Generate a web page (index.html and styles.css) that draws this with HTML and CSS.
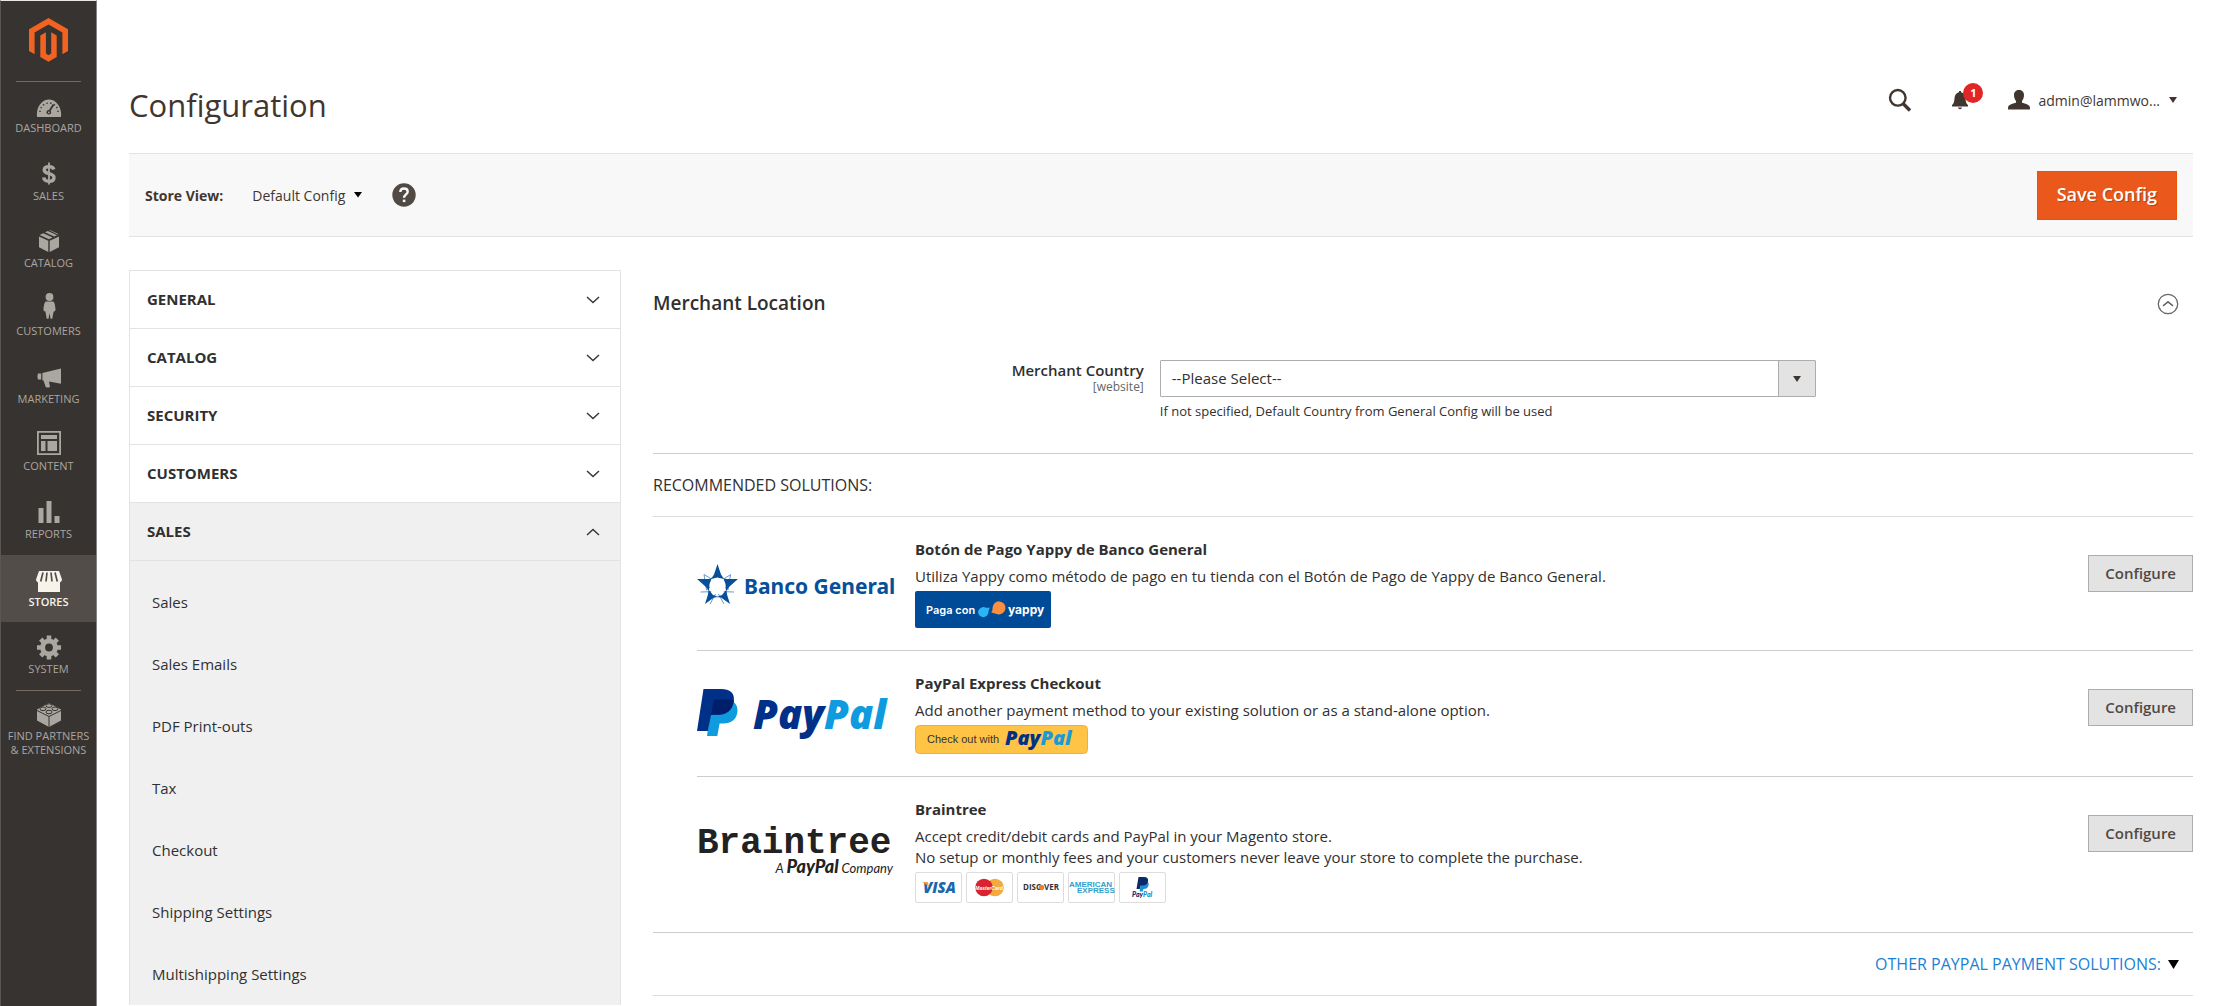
FILE: index.html
```html
<!DOCTYPE html>
<html lang="en">
<head>
<meta charset="utf-8">
<title>Configuration / Magento Admin</title>
<link rel="stylesheet" href="styles.css">
</head>
<body>
<div class="layout">
  <aside class="sidebar">
    <a class="brand" href="#" aria-label="Magento Admin">
      <svg width="39" height="44" viewBox="0 0 39 44" fill="#f26322"><path d="M19.500 0 39 11.200V33l-5.600 3.200V14.400l-13.900-8-13.900 8v21.800L0 33V11.200z"/><path d="M11.300 17.500 16.900 14.200V35.500l2.600 1.800 2.700-1.800V14.200l5.500 3.300V39l-8.200 4.800-8.200-4.800z"/></svg>
    </a>
    <nav class="menu">
      <ul class="menu-main">
        <li><a href="#"><svg width="28" height="28" viewBox="0 0 28 28"><path fill="currentColor" d="M2 27c-.3-2-.2-4 .2-6C3.600 14 8.500 9.500 14 9.500S24.400 14 25.800 21c.4 2 .5 4 .2 6z"/><g fill="none" stroke="#373330" stroke-width="1.400"><path stroke-dasharray="1.400 2.400" d="M5 22a9 9 0 0 1 18 0"/><path stroke-width="1.800" d="M13.500 22.500 18.500 14.500"/></g><circle cx="13.800" cy="22.300" r="2.300" fill="#373330"/><circle cx="13.800" cy="22.300" r=".9" fill="currentColor"/></svg><span>Dashboard</span></a></li>
        <li><a href="#"><svg width="28" height="28" viewBox="0 0 28 28" fill="none" stroke="currentColor" stroke-width="3.400"><path d="M18.800 11.500C18.300 9.500 16.500 8.600 14 8.600c-2.800 0-4.800 1.100-4.800 3.400 0 5 9.800 2.400 9.800 7.500 0 2.400-2 3.800-5 3.800-2.900 0-5-1.300-5.300-3.900"/><path stroke-width="1.800" d="M14 4.500v22"/></svg><span>Sales</span></a></li>
        <li><a href="#"><svg width="28" height="28" viewBox="0 0 28 28" fill="currentColor"><path d="M4 11.500 13.300 15.800V27L4 22.300zM24 11.500 14.700 15.800V27L24 22.300z"/><path d="M4.600 10 8.300 8.200 17.600 12.500 14 14.200zM10 7.300 12.800 6 22 10.200 19.300 11.600zM14.300 5.300 15 5l8.400 4-.6.400z"/></svg><span>Catalog</span></a></li>
        <li><a href="#"><svg width="28" height="28" viewBox="0 0 28 28" fill="currentColor"><circle cx="14.500" cy="4" r="3.900"/><path d="M10.800 8.600h7.400c1.300.6 2.100 4.200 2.300 8 0 1.400-.8 2.100-1.900 1.900l-1.300 7.200h-1.800l-1-5.500-1 5.500h-1.800l-1.300-7.200c-1.100.2-1.900-.5-1.900-1.900.2-3.800 1-7.400 2.300-8z"/></svg><span>Customers</span></a></li>
        <li><a href="#"><svg width="28" height="28" viewBox="0 0 28 28" fill="currentColor"><path d="M3 12.500h3.200v6H3c-.7-1.800-.7-4.200 0-6zM7.400 12 26 7.600v15.200L14 20.500l1 5.500c-1.700.8-3 .8-4.300 0L8.500 19.600l-1.100-.4z"/></svg><span>Marketing</span></a></li>
        <li><a href="#"><svg width="28" height="28" viewBox="0 0 28 28" fill="currentColor"><path fill-rule="evenodd" d="M2 3h24v24H2zm1.800 1.800v20.400h20.400V4.800z"/><path d="M6 7h16v4H6zM6 13h4.500v10H6zM12.500 13H22v10h-9.500z"/></svg><span>Content</span></a></li>
        <li><a href="#"><svg width="28" height="28" viewBox="0 0 28 28" fill="currentColor"><path d="M3.500 12h5v15h-5zM11.500 5h5v22h-5zM19.500 20h5v7h-5z"/></svg><span>Reports</span></a></li>
        <li class="is-active"><a href="#"><svg width="28" height="28" viewBox="0 0 28 28" fill="currentColor"><path d="M4 7h20l3 8.500c0 1.600-1 2.500-2 2.700V28H3v-9.800c-1-.2-2-1.100-2-2.700z"/><path fill="none" stroke="#524d49" stroke-width="1.700" d="M8 8.500 5.700 17.500M12 8.500l-1 9M16 8.500l1 9M20 8.500l2.300 9"/></svg><span>Stores</span></a></li>
        <li><a href="#"><svg width="28" height="28" viewBox="0 0 28 28"><circle cx="14" cy="16.500" r="6.400" fill="none" stroke="currentColor" stroke-width="5"/><path fill="none" stroke="currentColor" stroke-width="4.600" d="M14 4.500v4M14 24.500v4M2 16.500h4M22 16.500h4M5.700 8.200l2.700 2.700M19.600 22.100l2.700 2.700M22.300 8.200l-2.700 2.700M8.400 22.100l-2.700 2.700"/></svg><span>System</span></a></li>
      </ul>
      <ul class="menu-extra">
        <li><a href="#"><svg width="28" height="28" viewBox="0 0 28 28"><path fill="currentColor" d="M14 3 26 9.500V20.500L14 27 2 20.500V9.500z"/><path fill="none" stroke="#373330" stroke-width="1" d="M2 10.500 14 16.500l12-6M14 16.500V27"/><g fill="currentColor" stroke="#373330" stroke-width="1"><ellipse cx="14" cy="5.600" rx="3" ry="1.800"/><ellipse cx="8" cy="8.800" rx="3" ry="1.800"/><ellipse cx="20" cy="8.800" rx="3" ry="1.800"/><ellipse cx="14" cy="12" rx="3" ry="1.800"/></g></svg><span>Find Partners<br>&amp; Extensions</span></a></li>
      </ul>
    </nav>
  </aside>

  <div class="page">
    <header class="page-header">
      <h1>Configuration</h1>
      <div class="header-tools">
        <button class="icon-button" type="button" aria-label="Search"><svg width="24" height="24" viewBox="0 0 24 24" fill="none" stroke="#41362f"><circle cx="9.800" cy="9.800" r="7.800" stroke-width="2.400"/><path stroke-width="3.400" d="M15 15.500 22 22.500"/></svg></button>
        <button class="icon-button notifications" type="button" aria-label="Notifications"><svg width="18" height="20" viewBox="0 0 18 20" fill="#41362f"><path d="M8 1h2v1.200c3 .8 4.300 3 4.500 6.300.2 3.500.8 5.300 2.500 6.500v1.600H1V15c1.700-1.200 2.300-3 2.500-6.500C3.700 5.200 5 3 8 2.200zM7 17.600h4c-.3 1-1 1.600-2 1.600s-1.700-.6-2-1.600z"/></svg><span class="badge">1</span></button>
        <button class="account" type="button"><svg width="22" height="20" viewBox="0 0 22 20" fill="#41362f"><path d="M11 0c3 0 5 2 5 5 0 2.300-.7 4.600-2 6v1.700c3.400 1 6.800 1.700 7.700 3.800.3 1 .3 2 .3 2.500 0 .4-.2.500-.5.500H.5c-.3 0-.5-.1-.5-.5 0-.5 0-1.500.3-2.500.9-2.100 4.300-2.800 7.700-3.800V11C6.700 9.600 6 7.300 6 5c0-3 2-5 5-5z"/></svg><span>admin@lammwo...</span><svg width="10" height="6" viewBox="0 0 10 6" fill="#41362f"><path d="M1 0h8L5 6z"/></svg></button>
      </div>
    </header>

    <div class="page-actions">
      <span class="scope-label">Store View:</span>
      <button class="scope-switch" type="button"><span>Default Config</span><svg width="10" height="6" viewBox="0 0 10 6"><path d="M1 0h8L5 5.500z"/></svg></button>
      <button class="icon-button" type="button" aria-label="What is this?"><svg width="24" height="24" viewBox="0 0 24 24"><circle cx="12" cy="12" r="11.700" fill="#514943"/><path fill="none" stroke="#f8f8f8" stroke-width="2.400" d="M8.300 9C8.300 6.600 9.800 5.500 12 5.500s3.700 1.200 3.700 3.200c0 2.600-3.600 2.800-3.600 6"/><rect x="10.800" y="16.600" width="2.600" height="2.500" fill="#f8f8f8"/></svg></button>
      <button class="primary" type="button">Save Config</button>
    </div>

    <div class="columns">
      <nav class="tabs">
        <button class="tab" type="button">General<svg width="14" height="8" viewBox="0 0 14 8"><path d="M1 1l6 5.500L13 1"/></svg></button>
        <button class="tab" type="button">Catalog<svg width="14" height="8" viewBox="0 0 14 8"><path d="M1 1l6 5.500L13 1"/></svg></button>
        <button class="tab" type="button">Security<svg width="14" height="8" viewBox="0 0 14 8"><path d="M1 1l6 5.500L13 1"/></svg></button>
        <button class="tab" type="button">Customers<svg width="14" height="8" viewBox="0 0 14 8"><path d="M1 1l6 5.500L13 1"/></svg></button>
        <button class="tab is-open" type="button" aria-expanded="true">Sales<svg width="14" height="8" viewBox="0 0 14 8"><path d="M1 7l6-5.500L13 7"/></svg></button>
        <ul class="tab-items">
          <li><a href="#">Sales</a></li>
          <li><a href="#">Sales Emails</a></li>
          <li><a href="#">PDF Print-outs</a></li>
          <li><a href="#">Tax</a></li>
          <li><a href="#">Checkout</a></li>
          <li><a href="#">Shipping Settings</a></li>
          <li><a href="#">Multishipping Settings</a></li>
        </ul>
      </nav>

      <main class="settings">
        <section class="location">
          <div class="section-head">
            <h2>Merchant Location</h2>
            <button class="icon-button" type="button" aria-label="Collapse"><svg width="22" height="22" viewBox="0 0 22 22" fill="none" stroke="#666"><circle cx="11" cy="11" r="9.700" stroke-width="1.300"/><path stroke-width="1.500" d="M6 12.800l5-4 5 4"/></svg></button>
          </div>
          <div class="field">
            <label for="country">Merchant Country<span>[website]</span></label>
            <div class="control">
              <div class="select">
                <select id="country"><option>--Please Select--</option></select>
                <span class="select-arrow"><svg width="8" height="6" viewBox="0 0 8 6" fill="#41362f"><path d="M0 0h8L4 6z"/></svg></span>
              </div>
              <p class="note">If not specified, Default Country from General Config will be used</p>
            </div>
          </div>
        </section>

        <h3 class="group-title">Recommended Solutions:</h3>

        <ul class="solutions">
          <li class="solution">
            <svg class="logo logo-banco" width="196" height="42" viewBox="0 0 196 42" role="img" aria-label="Banco General">
              <g fill="none" stroke="#6d9acb" stroke-width="1"><path d="M7 10.500 9.500 26 20 17M33.500 10.500 31 26 20 17M3.500 28 20 27.500 13 40M37 28 20 27.500 27 40M7 10.500 13 14M34 10.500 28 14"/></g>
              <path fill="#fff" d="M20.500 13 29 19.500 26 30H15L12 19.500z"/>
              <g fill="#06509b"><path d="M20.500 0 24 10.500 27 15 20.500 13.500 14 15 17 10.500zM0 15h12l3-1.500L12.500 20l-.5 7-3.500-4.500zM41 15H29l-3-1.500L28.500 20l.5 7 3.500-4.500zM8 40l3-9.500.5-5 4.500 5.500 6 2-5 .5zM33 40l-3-9.500-.5-5-4.500 5.500-6 2 5 .5z"/></g>
              <text class="t-banco" x="47" y="30">Banco General</text>
            </svg>
            <div class="solution-body">
              <h4>Botón de Pago Yappy de Banco General</h4>
              <p>Utiliza Yappy como método de pago en tu tienda con el Botón de Pago de Yappy de Banco General.</p>
              <svg class="art" width="136" height="37" viewBox="0 0 136 37" role="img" aria-label="Paga con Yappy">
                <rect width="136" height="37" rx="2" fill="#004b98"/>
                <text class="t-paga" x="11" y="23">Paga con</text>
                <path fill="#2cb4f4" d="M63 20.500a5.700 5.700 0 0 1 8-3.800h4.200c-1 1-1.500 2-1.600 3.500a5.600 5.600 0 0 1-5 6A5.500 5.500 0 0 1 63 20.500z"/>
                <path fill="#fb8f3f" d="M77.500 17a6.500 6.500 0 1 1 5 6.200c-2.500-.6-4.500-1-6.500-1.900 1.300-.9 1.600-2.300 1.500-4.300z"/>
                <text class="t-yappy" x="93" y="23">yappy</text>
              </svg>
            </div>
            <button class="secondary" type="button">Configure</button>
          </li>
          <li class="solution">
            <svg class="logo logo-paypal" width="196" height="48" viewBox="0 0 196 48" role="img" aria-label="PayPal">
              <path fill="#0f9bde" d="M15 11h18c5 2 8.200 6 7.400 12-1 7.500-6 11.500-14 11.500h-3.800L20.300 47H10z"/>
              <path fill="#003087" d="M6.500 0H24c9 0 14 4 12.800 12C35.500 21.500 30 26 20 26h-6l-3.200 16H0z"/>
              <path fill="#001f6b" d="M17 10.500h16c1.300 0 2.700.3 3.900.7-1.200 9.300-6.900 14.300-16.900 14.300h-6z"/>
              <text class="t-paypal" x="56" y="40" fill="#003087">Pay<tspan fill="#0f9bde">Pal</tspan></text>
            </svg>
            <div class="solution-body">
              <h4>PayPal Express Checkout</h4>
              <p>Add another payment method to your existing solution or as a stand-alone option.</p>
              <svg class="art" width="173" height="29" viewBox="0 0 173 29" role="img" aria-label="Check out with PayPal">
                <rect x=".5" y=".5" width="172" height="28" rx="4" fill="#ffc445" stroke="#f5a94a"/>
                <text class="t-check" x="12" y="18">Check out with</text>
                <text class="t-checkpp" x="90" y="20" fill="#003087">Pay<tspan fill="#1a9bd7">Pal</tspan></text>
              </svg>
            </div>
            <button class="secondary" type="button">Configure</button>
          </li>
          <li class="solution">
            <svg class="logo logo-braintree" width="196" height="50" viewBox="0 0 196 50" role="img" aria-label="Braintree, a PayPal company">
              <text class="t-braintree" x="0" y="26">Braintree</text>
              <text class="t-company" x="196" y="46" text-anchor="end">A <tspan class="t-company-name">PayPal</tspan> Company</text>
            </svg>
            <div class="solution-body">
              <h4>Braintree</h4>
              <p>Accept credit/debit cards and PayPal in your Magento store.<br>No setup or monthly fees and your customers never leave your store to complete the purchase.</p>
              <ul class="cards">
                <li><svg width="45" height="29" viewBox="0 0 45 29" role="img" aria-label="Visa"><text class="t-visa" x="7" y="20">VISA</text><path fill="#f0a13c" d="M6 9h4.500c1 0 1.500.4 1.700 1.300l.8 4.200C11.500 12 9 10.200 6 9z"/></svg></li>
                <li><svg width="45" height="29" viewBox="0 0 45 29" role="img" aria-label="MasterCard"><circle cx="28" cy="14.500" r="8.800" fill="#f4a93c"/><circle cx="17" cy="14.500" r="8.800" fill="#d9232e"/><text class="t-mc" x="22" y="17" text-anchor="middle">MasterCard</text></svg></li>
                <li><svg width="45" height="29" viewBox="0 0 45 29" role="img" aria-label="Discover"><text class="t-disc" x="5" y="17">DISC</text><circle cx="23.500" cy="14.500" r="2.700" fill="#f07c29"/><text class="t-disc" x="26" y="17">VER</text></svg></li>
                <li><svg width="45" height="29" viewBox="0 0 45 29" role="img" aria-label="American Express"><g class="t-amex"><text x="0" y="14">AMERICAN</text><text x="8" y="20">EXPRESS</text></g></svg></li>
                <li><svg width="45" height="29" viewBox="0 0 45 29" role="img" aria-label="PayPal"><path fill="#1a8fd0" d="M21 8h6c1.500 1 2 2.500 1.500 4.500-.6 2.500-2.300 3.500-5 3.500l-.8 2.500h-3z"/><path fill="#0b2a6b" d="M18.500 4H24c3 0 4.500 1.500 4 4.200-.5 3-2.500 4.300-5.500 4.300h-2L19.800 16H16.500z"/><text class="t-ppmini" x="12" y="24">Pay<tspan fill="#1a8fd0">Pal</tspan></text></svg></li>
              </ul>
            </div>
            <button class="secondary" type="button">Configure</button>
          </li>
        </ul>

        <div class="more">
          <a href="#">Other PayPal Payment Solutions:</a>
          <svg width="11" height="9" viewBox="0 0 11 9"><path d="M0 0h11L5.500 9z"/></svg>
        </div>
      </main>
    </div>
  </div>
</div>
</body>
</html>
```

FILE: styles.css
```css
* { box-sizing: border-box; }

body {
  margin: 0;
  background: #fff;
  color: #303030;
  font: 15px/21px "Open Sans", sans-serif;
}

ul { margin: 0; padding: 0; list-style: none; }
h1, h2, h3, h4, p { margin: 0; }
a { color: inherit; text-decoration: none; }
button { font: inherit; color: inherit; cursor: pointer; border-radius: 0; }
svg { display: block; flex: none; overflow: visible; }

.layout { display: flex; min-height: 100vh; }

/* Main menu */
.sidebar {
  flex: none;
  width: 97px;
  border-left: 1px solid #5a5653;
  border-right: 1px solid #85817e;
  border-top: 1px solid #e8e8e8;
  background: #373330;
  color: #aaa6a0;
}
.brand {
  display: flex;
  justify-content: center;
  height: 80px;
  padding-top: 17px;
}
.menu-main, .menu-extra { position: relative; }
.menu-main { display: grid; grid-template-rows: repeat(9, 1fr); height: 609px; }
.menu-main::before, .menu-extra::before {
  content: "";
  position: absolute;
  top: 0;
  left: 15px;
  right: 15px;
  height: 1px;
  background: #736963;
}
.menu a {
  display: flex;
  flex-direction: column;
  align-items: center;
  gap: 3px;
  height: 100%;
  padding-top: 9px;
  font-size: 11px;
  line-height: 14px;
  text-align: center;
  text-transform: uppercase;
  white-space: nowrap;
}
.menu-extra a { padding-top: 10px; gap: 1px; }
.menu .is-active { background: #524d49; color: #f7f3eb; font-weight: 600; }

/* Page frame */
.page { flex: 1; min-width: 0; padding: 0 27px 0 32px; }
.page-header {
  display: flex;
  justify-content: space-between;
  align-items: flex-start;
  height: 153px;
  padding: 80px 15px 0 0;
}
h1 { color: #41362f; font-size: 31px; font-weight: 400; line-height: 50px; }
.header-tools { display: flex; align-items: center; gap: 39px; height: 40px; }
.icon-button { display: block; padding: 0; border: 0; background: none; }
.notifications { position: relative; }
.badge {
  position: absolute;
  top: -7px;
  left: 12px;
  width: 20px;
  height: 20px;
  border-radius: 50%;
  background: #e22626;
  color: #fff;
  font-size: 11px;
  font-weight: 700;
  line-height: 20px;
}
.account {
  display: flex;
  align-items: center;
  gap: 8px;
  padding: 0;
  border: 0;
  background: none;
  color: #41362f;
  font-size: 14px;
}

.page-actions {
  display: flex;
  align-items: center;
  height: 84px;
  padding: 0 16px;
  border: solid #e3e3e3;
  border-width: 1px 0;
  background: #f8f8f8;
  color: #41362f;
}
.scope-label { font-size: 14px; font-weight: 700; }
.scope-switch {
  display: flex;
  align-items: center;
  gap: 8px;
  margin: 0 29px;
  padding: 0;
  border: 0;
  background: none;
  font-size: 14px;
}
.primary {
  height: 49px;
  margin-left: auto;
  padding: 0 19px 2px;
  border: 1px solid #eb5202;
  background: #eb581c;
  color: #fff;
  font-size: 18px;
  font-weight: 600;
  text-shadow: 1px 1px 0 rgba(0, 0, 0, .25);
}

.columns { display: flex; gap: 32px; margin-top: 33px; }

/* Settings tabs */
.tabs {
  flex: none;
  width: 24%;
  max-width: 492px;
  border: solid #e3e3e3;
  border-width: 0 1px;
}
.tab {
  display: flex;
  justify-content: space-between;
  align-items: center;
  width: 100%;
  height: 58px;
  padding: 0 20px 0 17px;
  border: 0;
  border-top: 1px solid #e3e3e3;
  background: #fff;
  font-weight: 700;
  text-transform: uppercase;
}
.tab svg { fill: none; stroke: #41362f; stroke-width: 1.500; }
.tab.is-open, .tab-items { background: #f0f0f0; }
.tab-items { padding-top: 10px; border-top: 1px solid #e3e3e3; }
.tab-items a { display: block; padding: 0 22px; line-height: 62px; }

/* Settings column */
.settings { flex: 1; min-width: 0; }
.location { height: 184px; border-bottom: 1px solid #ccc; }
.section-head {
  display: flex;
  justify-content: space-between;
  padding: 21px 14px 0 0;
}
h2 { font-size: 19px; font-weight: 600; line-height: 24px; }
.section-head .icon-button { padding-top: 2px; }
.field { display: flex; gap: 16px; margin-top: 45px; }
.field label {
  width: calc(32% - 2px);
  font-weight: 600;
  line-height: 20px;
  text-align: right;
}
.field label span {
  display: block;
  color: #666;
  font-size: 12px;
  font-weight: 400;
  line-height: 14px;
}
.control { width: 42%; max-width: 656px; flex: 1 0 auto; }
.select { position: relative; }
.select select {
  display: block;
  width: 100%;
  height: 37px;
  padding: 0 46px 0 11px;
  border: 1px solid #adadad;
  border-radius: 1px;
  background: #fff;
  color: #303030;
  font: inherit;
  appearance: none;
}
.select-arrow {
  position: absolute;
  inset: 1px 1px 1px auto;
  display: flex;
  align-items: center;
  justify-content: center;
  width: 37px;
  border-left: 1px solid #adadad;
  background: #e3e3e3;
  pointer-events: none;
}
.note { margin-top: 4px; font-size: 13px; line-height: 20px; }

.group-title {
  height: 63px;
  border-bottom: 1px solid #ddd;
  font-size: 16px;
  font-weight: 400;
  line-height: 63px;
  text-transform: uppercase;
}

.solutions { border-bottom: 1px solid #ccc; }
.solution {
  display: flex;
  align-items: flex-start;
  margin-left: 44px;
  padding: 21px 0 22px;
}
.solution + .solution { border-top: 1px solid #ccc; }
.solution-body { flex: 1; margin-left: 22px; }
.solution h4 { font-size: 15px; font-weight: 700; line-height: 22px; }
.solution p { padding: 6px 0 4px; }
.logo-banco { margin-top: 26px; }
.logo-paypal { margin-top: 17px; }
.logo-braintree { margin-top: 29px; }

.secondary {
  height: 37px;
  margin-top: 17px;
  padding: 0 16px;
  border: 1px solid #adadad;
  background: #e3e3e3;
  color: #514943;
  font-weight: 600;
}

.cards { display: flex; gap: 4px; padding-bottom: 7px; }
.cards li { border: 1px solid #ddd; border-radius: 2px; }

.more {
  display: flex;
  justify-content: flex-end;
  align-items: center;
  gap: 7px;
  height: 63px;
  padding-right: 14px;
  border-bottom: 1px solid #ddd;
}
.more a { color: #1a7fd6; font-size: 16px; text-transform: uppercase; }

/* Lettering inside the logos */
.t-banco { font: 700 21px "Noto Sans", sans-serif; fill: #06509b; }
.t-paga { font: 600 11px Inter, sans-serif; fill: #fff; }
.t-yappy { font: 700 12px Inter, sans-serif; fill: #fff; }
.t-paypal { font: italic 800 40px "Open Sans", sans-serif; }
.t-check { font: 11px "Liberation Sans", sans-serif; fill: #333; }
.t-checkpp { font: italic 800 20px "Open Sans", sans-serif; }
.t-braintree { font: 700 36px "Liberation Mono", monospace; fill: #222; }
.t-company { font: italic 13px Lato, sans-serif; fill: #222; }
.t-company-name { font-weight: 900; font-size: 18px; }
.t-visa { font: italic 800 15px "Open Sans", sans-serif; fill: #1b67ae; }
.t-mc { font: italic 700 5px "Liberation Sans", sans-serif; fill: #fff; }
.t-disc { font: 700 8px "Open Sans", sans-serif; fill: #333; }
.t-amex { font: 700 8px "Liberation Sans", sans-serif; fill: #2d9fd0; }
.t-ppmini { font: italic 900 7px Lato, sans-serif; fill: #0b2a6b; }
```
